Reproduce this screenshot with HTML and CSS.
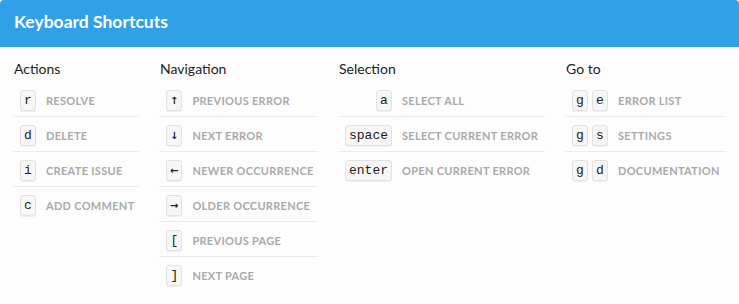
FILE: index.html
```html
<!DOCTYPE html>
<html lang="en">
<head>
  <meta charset="UTF-8" />
  <title>Keyboard Shortcuts</title>
  <link rel="stylesheet" href="styles.css">
</head>
<body>
  <div class="modal">
    <header class="modal-header">
      <h1>Keyboard Shortcuts</h1>
    </header>
    <main class="shortcuts">
      <section class="group">
        <h2>Actions</h2>
        <table>
          <tr><td class="keys"><kbd>r</kbd></td><td class="label">Resolve</td></tr>
          <tr><td class="keys"><kbd>d</kbd></td><td class="label">Delete</td></tr>
          <tr><td class="keys"><kbd>i</kbd></td><td class="label">Create Issue</td></tr>
          <tr><td class="keys"><kbd>c</kbd></td><td class="label">Add Comment</td></tr>
        </table>
      </section>
      <section class="group">
        <h2>Navigation</h2>
        <table>
          <tr><td class="keys"><kbd class="arrow">&uarr;</kbd></td><td class="label">Previous Error</td></tr>
          <tr><td class="keys"><kbd class="arrow">&darr;</kbd></td><td class="label">Next Error</td></tr>
          <tr><td class="keys"><kbd class="arrow">&larr;</kbd></td><td class="label">Newer Occurrence</td></tr>
          <tr><td class="keys"><kbd class="arrow">&rarr;</kbd></td><td class="label">Older Occurrence</td></tr>
          <tr><td class="keys"><kbd>[</kbd></td><td class="label">Previous Page</td></tr>
          <tr><td class="keys"><kbd>]</kbd></td><td class="label">Next Page</td></tr>
        </table>
      </section>
      <section class="group">
        <h2>Selection</h2>
        <table>
          <tr><td class="keys"><kbd>a</kbd></td><td class="label">Select All</td></tr>
          <tr><td class="keys"><kbd>space</kbd></td><td class="label">Select Current Error</td></tr>
          <tr><td class="keys"><kbd>enter</kbd></td><td class="label">Open Current Error</td></tr>
        </table>
      </section>
      <section class="group">
        <h2>Go to</h2>
        <table>
          <tr><td class="keys"><kbd>g</kbd><kbd>e</kbd></td><td class="label">Error List</td></tr>
          <tr><td class="keys"><kbd>g</kbd><kbd>s</kbd></td><td class="label">Settings</td></tr>
          <tr><td class="keys"><kbd>g</kbd><kbd>d</kbd></td><td class="label">Documentation</td></tr>
        </table>
      </section>
    </main>
  </div>
</body>
</html>
```

FILE: styles.css
```css
*,*::before,*::after{box-sizing:border-box;margin:0;padding:0;}
body{
  font-family: Lato, "Open Sans", sans-serif;
  background:#fff;
  color:#333;
}
.modal{
  width:739px;
  height:304px;
  background:#fdfdfd;
  border-radius:4px;
  overflow:hidden;
}
.modal-header{
  height:47px;
  background:#30a0e8;
  padding:0 14px 4px;
  display:flex;align-items:center;
}
.modal-header h1{
  font-size:17.5px;
  font-weight:700;
  color:#fff;
}
.shortcuts{
  display:grid;
  grid-template-columns:126px 159px 207px 161px;
  column-gap:20px;
  padding:13px 13px 0;
}
.group h2{
  font-size:14px;
  font-weight:400;
  line-height:17px;
  color:#222;
  padding-left:1px;
  margin-bottom:5px;
}
.group table{
  width:100%;
  border-collapse:collapse;
}
.group tr{border-bottom:1px solid #ebebeb;}
.group tr:last-child{border-bottom:none;}
.group td{
  height:34px;
  padding:8px 0 5px;
  vertical-align:middle;
}
.group td.keys{
  width:1%;
  white-space:nowrap;
  text-align:right;
  padding-left:7px;
  font-size:0;
  line-height:0;
}
.group td.label{
  padding-left:10px;
  font-size:11px;
  line-height:13px;
  font-weight:700;
  letter-spacing:.3px;
  text-transform:uppercase;
  color:#aaa;
  white-space:nowrap;
}
kbd{
  display:inline-block;
  vertical-align:top;
  min-width:16px;
  height:21px;
  padding:0 3px;
  font-family:"Liberation Mono", "DejaVu Sans Mono", monospace;
  font-size:13px;
  line-height:19px;
  text-align:center;
  color:#222;
  background:#f6f6f6;
  border:1px solid #e2e2e2;
  border-radius:3px;
  box-shadow:0 1px 0 rgba(0,0,0,.06);
}
kbd + kbd{margin-left:4px;}
kbd.arrow{
  font-family:"DejaVu Sans", sans-serif;
  font-size:10px;
  font-weight:700;
}
```
